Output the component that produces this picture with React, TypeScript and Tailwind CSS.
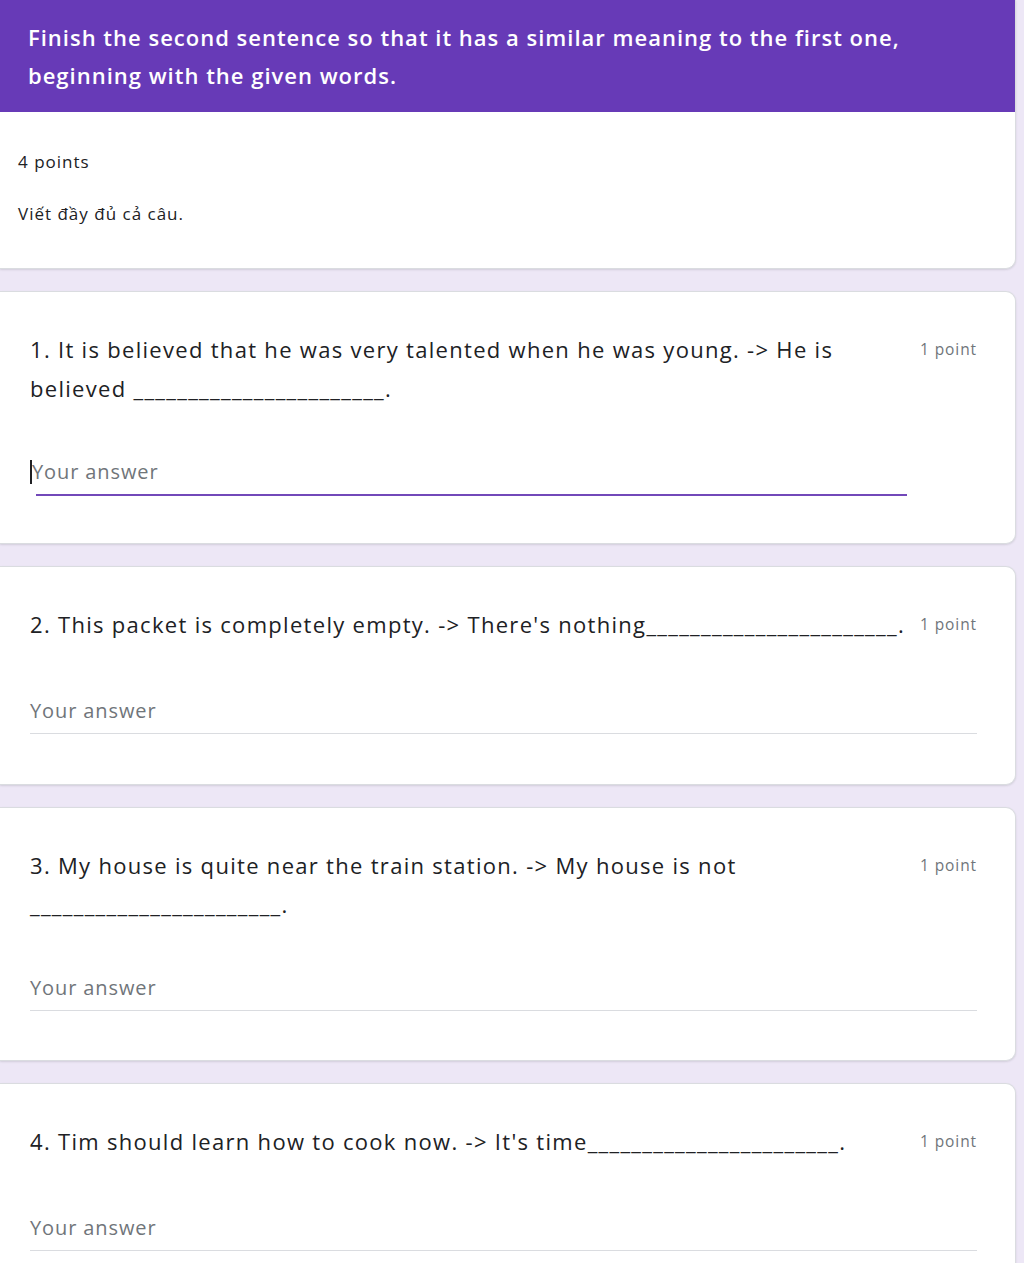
import React from "react";

const U = "_______________________";

type Q = {
  text: React.ReactNode;
  mt: number;
  pb: number;
  focused?: boolean;
};

function QuestionCard({ q }: { q: Q }) {
  return (
    <div
      className="bg-white rounded-r-[10px] border border-l-0 border-[#dadce0] shadow-[0_1px_2px_rgba(60,64,67,0.15)] pl-[30px] pr-[38px] pt-[38px]"
      style={{ paddingBottom: q.pb }}
    >
      <div className="flex items-start gap-[8px]">
        <div className="flex-1 text-[22px] leading-[39px] text-[#202124] tracking-[1.3px]">{q.text}</div>
        <div className="w-[62px] shrink-0 text-[15.5px] leading-[39px] text-[#70757a] text-right whitespace-nowrap tracking-[0.9px]">1 point</div>
      </div>
      {q.focused ? (
        <div className="w-[877px]" style={{ marginTop: q.mt }}>
          <div className="relative text-[20px] leading-[28px] text-[#70757a] pl-[2px] tracking-[0.9px]">
            <span className="absolute left-0 top-[2px] h-[24px] w-[2px] bg-[#202124]" />
            Your answer
          </div>
          <div className="mt-[8px] ml-[6px] h-[2px] bg-[#7248b9]" />
        </div>
      ) : (
        <div style={{ marginTop: q.mt }}>
          <div className="text-[20px] leading-[28px] text-[#70757a] tracking-[0.9px]">Your answer</div>
          <div className="mt-[8px] h-px bg-[#dadce0] w-[947px]" />
        </div>
      )}
    </div>
  );
}

export default function App() {
  const qs: Q[] = [
    {
      text: (
        <>
          1. It is believed that he was very talented when he was young. -&gt; He is believed {U}.
        </>
      ),
      mt: 50,
      pb: 47,
      focused: true,
    },
    {
      text: <>2. This packet is completely empty. -&gt; There's nothing{U}.</>,
      mt: 53,
      pb: 50,
    },
    {
      text: <>3. My house is quite near the train station. -&gt; My house is not {U}.</>,
      mt: 50,
      pb: 49,
    },
    {
      text: <>4. Tim should learn how to cook now. -&gt; It's time{U}.</>,
      mt: 53,
      pb: 47,
    },
  ];
  return (
    <div
      className="min-h-[1263px] bg-[#ede7f6] pr-[8px] overflow-hidden"
      style={{ fontFamily: "'Open Sans', 'Noto Sans', sans-serif" }}
    >
      <div className="bg-white rounded-br-[10px] border-b border-r border-[#dadce0] shadow-[0_1px_2px_rgba(60,64,67,0.15)] overflow-hidden">
        <div className="bg-[#673ab7] pl-[28px] pr-[60px] pt-[18px] pb-[18px] text-white text-[22px] leading-[38px] font-semibold tracking-[1px]">
          Finish the second sentence so that it has a similar meaning to the first one, beginning with the given words.
        </div>
        <div className="pl-[18px] pt-[38px] pb-[42px] text-[#202124] text-[17px] leading-[24px] tracking-[1px]">
          <div>4 points</div>
          <div className="mt-[28px]">Viết đầy đủ cả câu.</div>
        </div>
      </div>
      <div className="flex flex-col gap-[22px] mt-[22px]">
        {qs.map((q, i) => (
          <QuestionCard key={i} q={q} />
        ))}
      </div>
    </div>
  );
}
